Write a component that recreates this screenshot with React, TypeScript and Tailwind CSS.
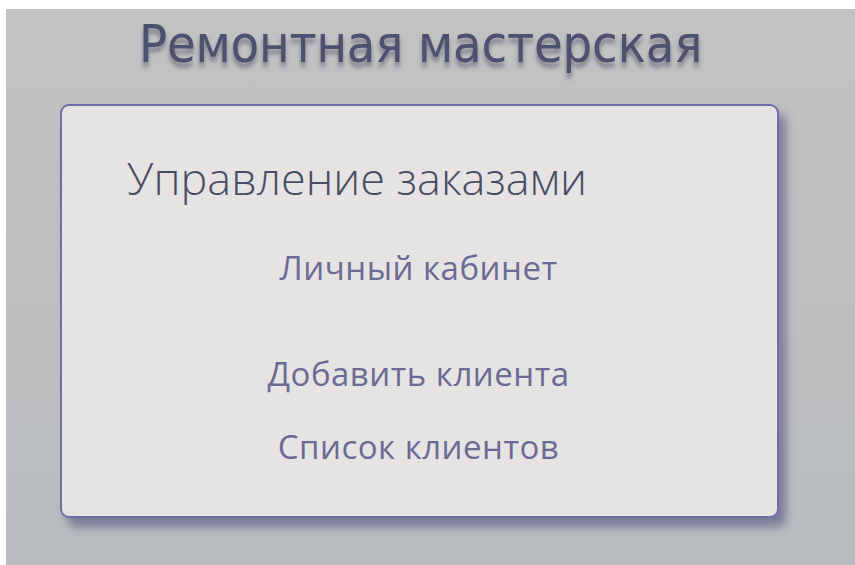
export default function App() {
    const links = ['Добавить клиента', 'Список клиентов']

    return (
        <div className="w-[855px] h-[565px] bg-white pt-[9px] pl-[6px] overflow-hidden">
            <div className="h-full w-full bg-gradient-to-b from-[#c2c2c2] to-[#b9bcbf] pt-[5px]">
                <h1
                    className="text-center text-[#4d5170] text-[52px] leading-[60px] pr-[20px] tracking-[-0.2px] [text-shadow:0_5px_4px_rgba(40,40,70,0.45)]"
                    style={{ fontFamily: '"Liberation Sans Narrow", "DejaVu Sans Condensed", sans-serif' }}
                >
                    Ремонтная мастерская
                </h1>
                <div className="mt-[30px] ml-[54px] w-[719px] h-[414px] rounded-[9px] border-2 border-[#6e6eaa] bg-[#e5e4e3] shadow-[7px_9px_10px_rgba(70,70,120,0.55)]">
                    <h2
                        className="pl-[65px] pt-[47px] text-[45px] leading-[50px] font-light text-[#4a4c64]"
                        style={{ fontFamily: '"Open Sans", sans-serif' }}
                    >
                        Управление заказами
                    </h2>
                    <nav
                        className="flex flex-col items-center pr-[2px] text-[33px] tracking-[0.5px] text-[#6c6a94]"
                        style={{ fontFamily: '"Open Sans", sans-serif' }}
                    >
                        <a className="mt-[45px] leading-[40px]">Личный кабинет</a>
                        <div className="mt-[66px] flex flex-col items-center gap-[33px]">
                            {links.map((label) => (
                                <a key={label} className="leading-[40px]">
                                    {label}
                                </a>
                            ))}
                        </div>
                    </nav>
                </div>
            </div>
        </div>
    )
}
